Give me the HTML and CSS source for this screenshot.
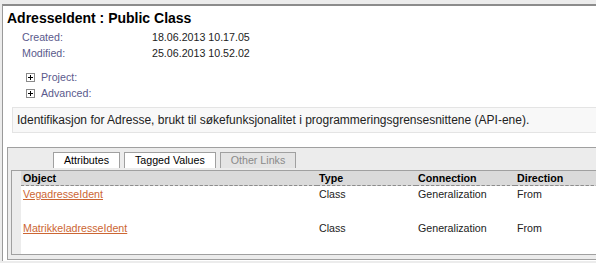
FILE: index.html
```html
<!DOCTYPE html>
<html lang="no">
<head>
    <meta charset="UTF-8">
    <title>AdresseIdent : Public Class</title>
    <link rel="stylesheet" href="styles.css">
</head>
<body>
    <div class="page">
        <h1 class="title">AdresseIdent : Public Class</h1>

        <div class="meta">
            <span class="label">Created:</span><span>18.06.2013 10.17.05</span>
            <span class="label">Modified:</span><span>25.06.2013 10.52.02</span>
        </div>

        <div class="sections">
            <div class="toggle">
                <svg width="9" height="9" viewBox="0 0 9 9"><rect x="0.5" y="0.5" width="8" height="8" fill="#fff" stroke="#8a8a8a"/><path d="M2 4.5h5M4.5 2v5" stroke="#000" stroke-width="1"/></svg>
                <span class="label">Project:</span>
            </div>
            <div class="toggle">
                <svg width="9" height="9" viewBox="0 0 9 9"><rect x="0.5" y="0.5" width="8" height="8" fill="#fff" stroke="#8a8a8a"/><path d="M2 4.5h5M4.5 2v5" stroke="#000" stroke-width="1"/></svg>
                <span class="label">Advanced:</span>
            </div>
        </div>

        <div class="notes">Identifikasjon for Adresse, brukt til søkefunksjonalitet i programmeringsgrensesnittene (API-ene).</div>

        <div class="tab-panel">
            <div class="tabs">
                <span class="tab">Attributes</span>
                <span class="tab">Tagged Values</span>
                <span class="tab disabled">Other Links</span>
            </div>
            <div class="grid-box">
                <div class="gutter"></div>
                <table class="links">
                    <colgroup>
                        <col class="c-object">
                        <col class="c-type">
                        <col class="c-conn">
                        <col>
                    </colgroup>
                    <thead>
                        <tr><th>Object</th><th>Type</th><th>Connection</th><th>Direction</th></tr>
                    </thead>
                    <tbody>
                        <tr><td><a href="#">VegadresseIdent</a></td><td>Class</td><td>Generalization</td><td>From</td></tr>
                        <tr><td><a href="#">MatrikkeladresseIdent</a></td><td>Class</td><td>Generalization</td><td>From</td></tr>
                    </tbody>
                </table>
            </div>
        </div>
    </div>
</body>
</html>
```

FILE: styles.css
```css
html, body {
    margin: 0;
    padding: 0;
    overflow: hidden;
}

body {
    background: #ececec;
    font-family: 'Liberation Sans', Arial, sans-serif;
    font-size: 10.67px;
    color: #222;
}

/* the page is cut off at the window's right and bottom edge */
.page {
    margin: 4px 0 0 2px;
    height: 257px;
    box-sizing: border-box;
    overflow: hidden;
    background: #fff;
    border-top: 2px solid #8c8c8c;
    border-left: 1px solid #9a9a9a;
}

.title {
    margin: 0;
    padding: 4px 0 0 4px;
    font-size: 14px;
    line-height: 16px;
    color: #000;
}

.meta {
    display: grid;
    grid-template-columns: 130px auto;
    margin: 3px 0 0 19px;
    line-height: 16px;
}

.label {
    color: #5a5a8c;
}

.sections {
    margin: 8px 0 0 23px;
    line-height: 16px;
}

.toggle {
    display: flex;
    align-items: center;
    gap: 6px;
}

.notes {
    margin: 6px -20px 0 9px;
    padding: 4px 4px;
    background: #f8f8f8;
    border: 1px solid #e4e4e4;
    font-size: 12px;
    line-height: 16px;
}

.tab-panel {
    margin: 14px -20px 0 4px;
    padding: 4px 0 4px 3px;
    background: #ececec;
    border: 1px solid #a0a0a0;
}

.tabs {
    display: flex;
    gap: 4px;
    padding-left: 42px;
}

.tab {
    height: 15px;
    line-height: 15px;
    padding: 0 10px;
    background: #fff;
    border: 1px solid #a0a0a0;
    border-bottom: none;
    color: #000;
}

.tab.disabled {
    background: #e4e4e4;
    color: #8a8a8a;
}

.grid-box {
    display: flex;
    margin-top: 2px;
    background: #fff;
    border: 1px solid #a0a0a0;
}

.gutter {
    width: 9px;
    flex: none;
    background: #ececec;
}

.links {
    flex: 1;
    border-collapse: collapse;
    table-layout: fixed;
}

.c-object { width: 296px; }
.c-type { width: 99px; }
.c-conn { width: 99px; }

.links th {
    height: 14px;
    line-height: 14px;
    padding: 0 0 0 2px;
    text-align: left;
    background: #dadada;
    border-bottom: 1px dashed #8c8c8c;
    color: #000;
}

.links td {
    height: 34px;
    padding: 0 0 0 2px;
    line-height: 16px;
    vertical-align: top;
    box-sizing: border-box;
}

.links a {
    color: #cc6633;
}
```
